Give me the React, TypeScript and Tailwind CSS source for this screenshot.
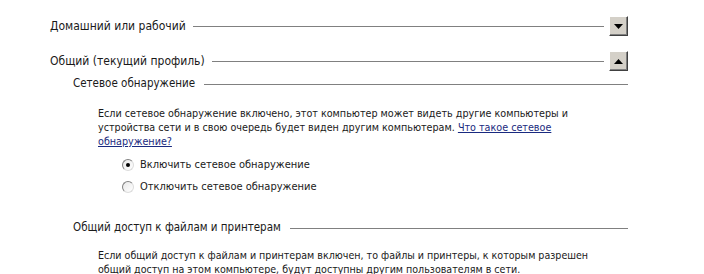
import React from 'react';

const font = { fontFamily: '"DejaVu Sans Condensed", "DejaVu Sans", Verdana, sans-serif' };

const ArrowButton: React.FC<{ up?: boolean }> = ({ up }) => (
  <div className="w-[19px] h-[20px] bg-[#d4d0c8] border border-t-white border-l-white border-r-[#404040] border-b-[#404040] shadow-[inset_-1px_-1px_0_#808080] flex items-center justify-center shrink-0">
    <svg width="9" height="5" viewBox="0 0 9 5">
      {up ? <polygon points="0,5 9,5 4.5,0" fill="#000" /> : <polygon points="0,0 9,0 4.5,5" fill="#000" />}
    </svg>
  </div>
);

const SectionHeader: React.FC<{ title: string; up?: boolean }> = ({ title, up }) => (
  <div className="flex items-center pl-[50px] pr-[76px]">
    <span className="text-[12px] text-[#1a1a1a] whitespace-nowrap">{title}</span>
    <div className="flex-1 h-px bg-[#808080] ml-[7px] mr-[5px]" />
    <ArrowButton up={up} />
  </div>
);

const SubHeader: React.FC<{ title: string }> = ({ title }) => (
  <div className="flex items-center h-[14px] pl-[73px] pr-[76px]">
    <span className="text-[11.5px] text-[#1a1a1a] whitespace-nowrap">{title}</span>
    <div className="flex-1 h-px bg-[#808080] ml-[9px]" />
  </div>
);

const Radio: React.FC<{ checked?: boolean; label: string }> = ({ checked, label }) => (
  <div className="flex items-center h-[16px] pl-[122px]">
    <div className="w-[12px] h-[12px] rounded-full border border-t-[#808080] border-l-[#808080] border-r-[#dcdcdc] border-b-[#dcdcdc] bg-gradient-to-br from-[#e8e8e8] to-white flex items-center justify-center">
      {checked && <div className="w-[4px] h-[4px] rounded-full bg-black" />}
    </div>
    <span className="ml-[6px] text-[11px] text-[#1a1a1a] whitespace-nowrap">{label}</span>
  </div>
);

export default function App() {
  return (
    <div className="w-[704px] h-[274px] bg-white overflow-hidden" style={font}>
      <div className="h-[16px]" />
      <SectionHeader title="Домашний или рабочий" />
      <div className="h-[15px]" />
      <SectionHeader title="Общий (текущий профиль)" up />
      <div className="mt-[6px]">
        <SubHeader title="Сетевое обнаружение" />
      </div>
      <p className="mt-[16px] pl-[98px] text-[10.7px] leading-[14px] text-[#1a1a1a] whitespace-nowrap">
        Если сетевое обнаружение включено, этот компьютер может видеть другие компьютеры и
        <br />
        устройства сети и в свою очередь будет виден другим компьютерам.{' '}
        <a href="#" className="text-[#1a2a80] underline">
          Что такое сетевое
          <br />
          обнаружение?
        </a>
      </p>
      <div className="mt-[8px]">
        <Radio checked label="Включить сетевое обнаружение" />
      </div>
      <div className="mt-[6px]">
        <Radio label="Отключить сетевое обнаружение" />
      </div>
      <div className="mt-[26px]">
        <SubHeader title="Общий доступ к файлам и принтерам" />
      </div>
      <p className="mt-[13px] pl-[98px] text-[10.6px] leading-[14px] text-[#1a1a1a] whitespace-nowrap">
        Если общий доступ к файлам и принтерам включен, то файлы и принтеры, к которым разрешен
        <br />
        общий доступ на этом компьютере, будут доступны другим пользователям в сети.
      </p>
    </div>
  );
}
